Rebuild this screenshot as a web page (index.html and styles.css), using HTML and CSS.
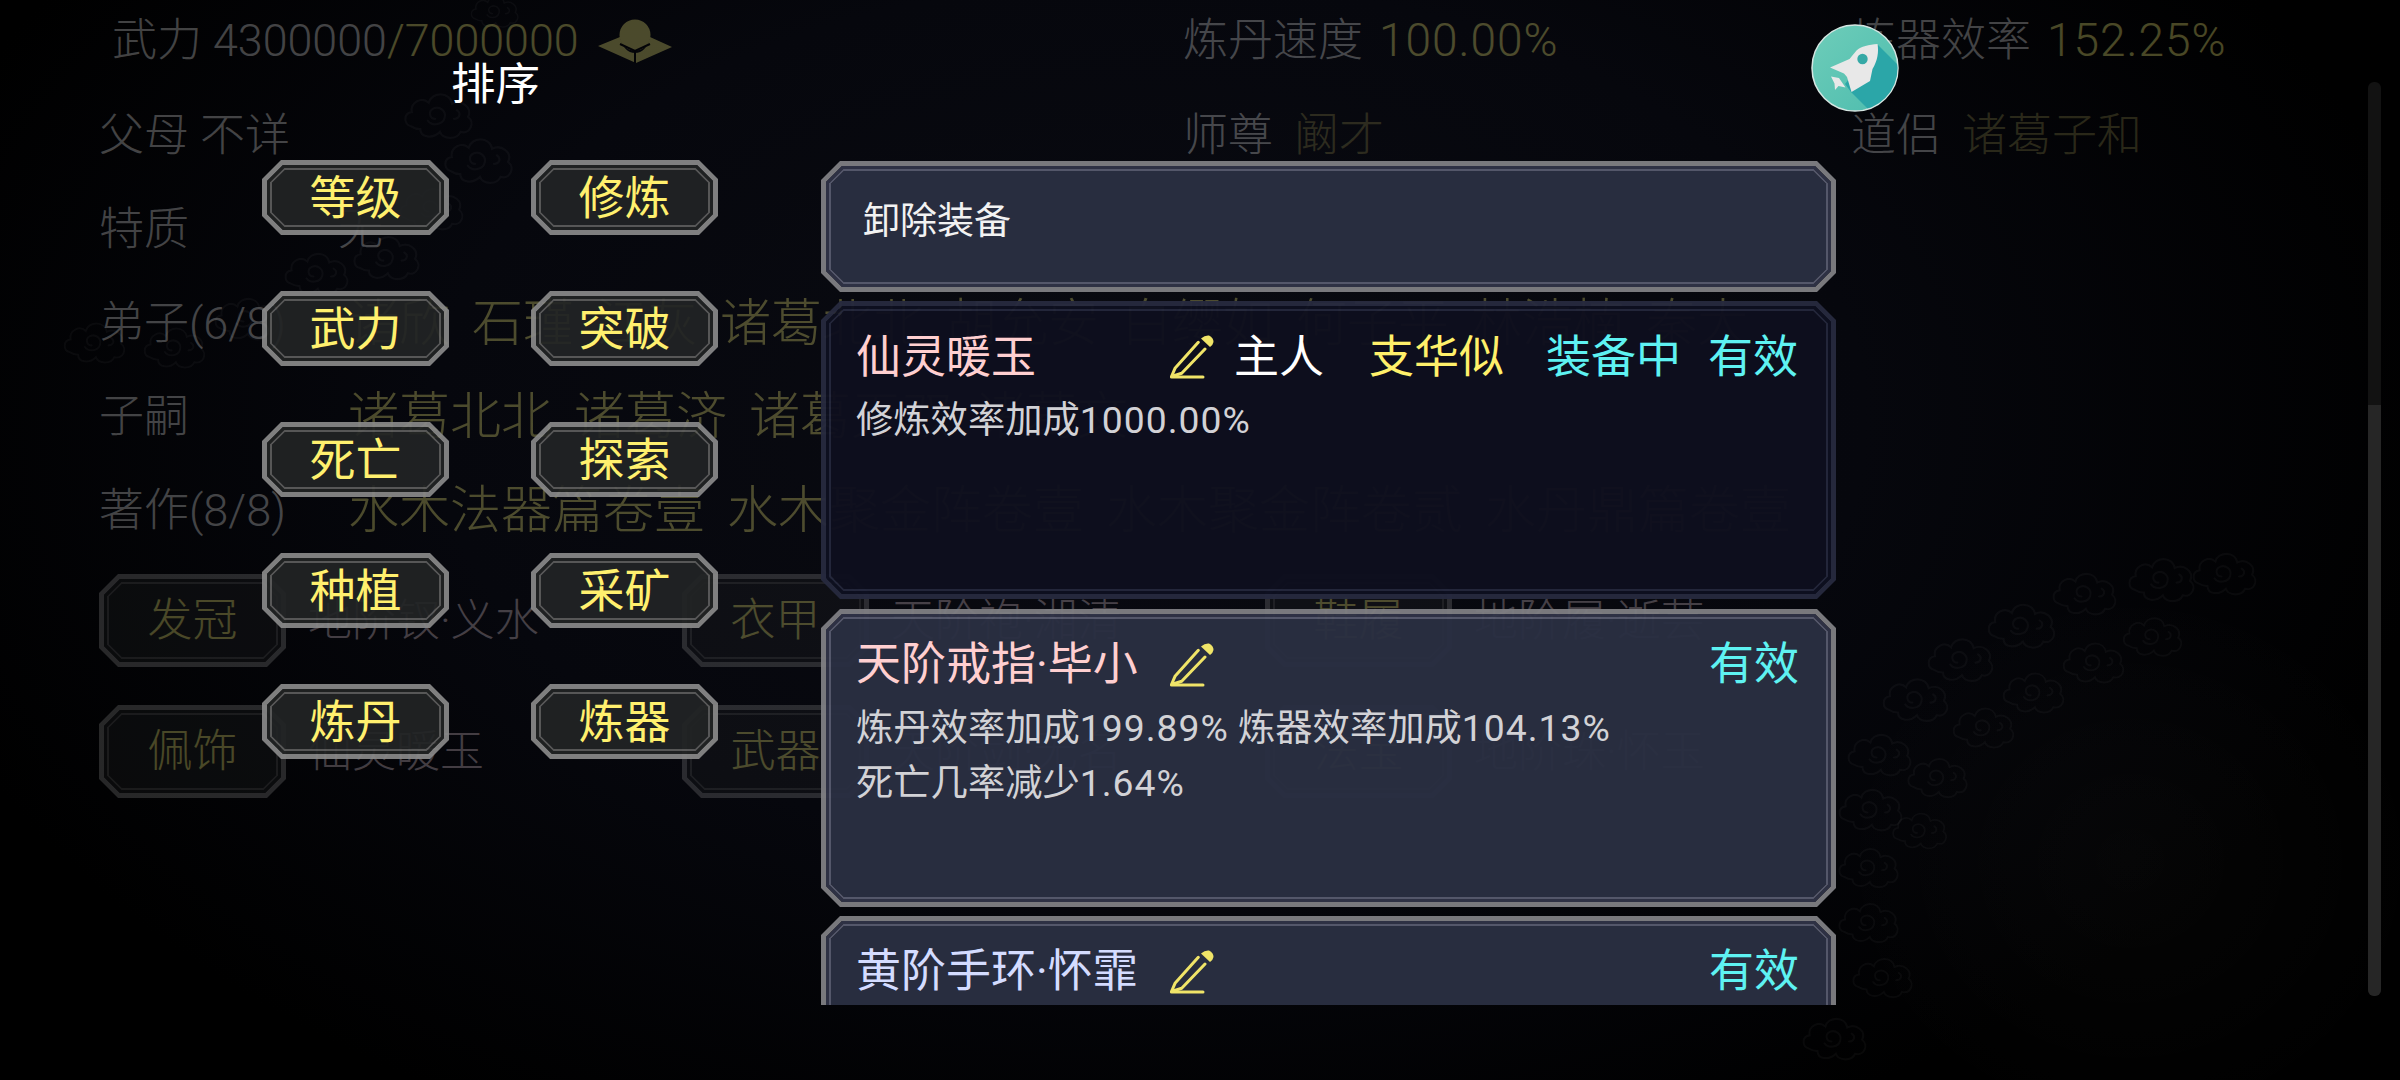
FILE: index.html
```html
<!DOCTYPE html>
<html lang="zh-CN">
<head>
<meta charset="utf-8">
<title>排序</title>
<link rel="stylesheet" href="styles.css">
</head>
<body>
<svg class="defs" width="0" height="0" aria-hidden="true">
  <defs>
    <symbol id="pencil" viewBox="0 0 44 44">
      <g fill="none" stroke="currentColor" stroke-width="3" stroke-linejoin="round" stroke-linecap="round">
        <path d="M28.3 7.3L5 33.3L1.5 41.5L11.7 38.3L35 14"/>
        <path d="M1.5 42H33"/>
      </g>
      <path fill="currentColor" d="M31 3.5Q35 0 39 .5Q43.5 2.5 43.5 7Q43 10 40 12Z"/>
    </symbol>
    <symbol id="cloud" viewBox="0 0 80 64" overflow="visible">
      <path fill="none" stroke="currentColor" stroke-width="2.4" stroke-linecap="round" d="M10 44C2 42 2 30 11 29C9 18 22 12 29 19C32 7 52 7 54 20C64 15 76 24 71 34C79 40 73 53 63 50C59 59 44 58 41 50C33 58 20 56 20 47C17 47 13 46 10 44ZM36 36C30 36 28 28 34 25C41 22 48 28 46 35C44 43 32 44 28 38M56 36C62 36 64 30 59 27"/>
    </symbol>
    <radialGradient id="blobFill">
      <stop offset="0" stop-color="#fff" stop-opacity=".02"/>
      <stop offset="1" stop-color="#fff" stop-opacity="0"/>
    </radialGradient>
  </defs>
</svg>

<main class="stage">
  <svg class="clouds" viewBox="0 0 2400 1080" width="2400" height="1080" aria-hidden="true">
    <ellipse fill="url(#blobFill)" cx="2130" cy="860" rx="300" ry="280"/>
    <g class="cloud-set">
      <use href="#cloud" x="2190" y="545" width="70" height="56"/>
      <use href="#cloud" x="2125" y="550" width="74" height="58"/>
      <use href="#cloud" x="2050" y="565" width="70" height="56"/>
      <use href="#cloud" x="1985" y="595" width="74" height="60"/>
      <use href="#cloud" x="1925" y="630" width="72" height="58"/>
      <use href="#cloud" x="1880" y="670" width="72" height="58"/>
      <use href="#cloud" x="1845" y="725" width="70" height="58"/>
      <use href="#cloud" x="1836" y="780" width="70" height="58"/>
      <use href="#cloud" x="1836" y="840" width="66" height="54"/>
      <use href="#cloud" x="1836" y="895" width="66" height="54"/>
      <use href="#cloud" x="1850" y="950" width="66" height="54"/>
      <use href="#cloud" x="1800" y="1010" width="70" height="56"/>
      <use href="#cloud" x="2120" y="610" width="66" height="52"/>
      <use href="#cloud" x="2060" y="635" width="68" height="54"/>
      <use href="#cloud" x="2000" y="665" width="68" height="54"/>
      <use href="#cloud" x="1950" y="700" width="68" height="54"/>
      <use href="#cloud" x="1905" y="750" width="66" height="54"/>
      <use href="#cloud" x="1890" y="805" width="60" height="50"/>
      <use href="#cloud" x="460" y="-10" width="70" height="42"/>
      <use href="#cloud" x="400" y="85" width="78" height="60"/>
      <use href="#cloud" x="440" y="130" width="78" height="60"/>
      <use href="#cloud" x="395" y="180" width="74" height="56"/>
      <use href="#cloud" x="350" y="228" width="74" height="58"/>
      <use href="#cloud" x="280" y="245" width="74" height="56"/>
      <use href="#cloud" x="210" y="290" width="74" height="56"/>
      <use href="#cloud" x="140" y="320" width="70" height="54"/>
      <use href="#cloud" x="60" y="315" width="70" height="54"/>
    </g>
  </svg>

  <div class="dim">
    <div class="stat-row">
      <div class="stat power">武力 <span class="power-num">4300000</span><span class="gold power-num">/7000000</span>
        <svg class="ingot" viewBox="0 0 74 44" width="74" height="44" aria-hidden="true">
          <path class="ingot-fill" d="M0 27L22 18Q26 34 37 34Q48 34 52 18L74 28L38 44Z"/>
          <circle class="ingot-fill" cx="37" cy="16" r="15.5"/>
          <path class="ingot-line" d="M22 25L37 32L52 25M37 32V44"/>
        </svg>
      </div>
      <div class="stat">炼丹速度 <span class="gold gap-s num">100.00%</span></div>
      <div class="stat">炼器效率 <span class="gold gap-s num">152.25%</span></div>
    </div>
    <div class="stat-row">
      <div class="stat">父母 不详</div>
      <div class="stat">师尊 <span class="dull">阚才</span></div>
      <div class="stat">道侣 <span class="dull">诸葛子和</span></div>
    </div>
    <div class="info-row"><span class="label">特质</span><span class="none">无</span></div>
    <div class="info-row"><span class="label">弟子(6/8)</span><span class="names"><b>诸欣</b><b>石瑾</b><b>江灰</b><b>诸葛北北</b><b>胡允安</b><b>白缨如</b><b>何子平</b><b>林浩楠</b><b>秦大</b></span></div>
    <div class="info-row"><span class="label">子嗣</span><span class="names"><b>诸葛北北</b><b>诸葛济</b><b>诸葛无双</b><b>诸葛文</b></span></div>
    <div class="info-row"><span class="label">著作(8/8)</span><span class="names"><b>水木法器篇卷壹</b><b>水木聚金阵卷壹</b><b>水木聚金阵卷贰</b><b>水丹鼎篇卷壹</b></span></div>
    <div class="equip-grid">
      <div class="equip"><span class="slot frame-btn">发冠</span><span class="item">地阶钗·义水</span></div>
      <div class="equip"><span class="slot frame-btn">衣甲</span><span class="item">天阶袍·湘清</span></div>
      <div class="equip"><span class="slot frame-btn">鞋履</span><span class="item">地阶履·逝芸</span></div>
      <div class="equip"><span class="slot frame-btn">佩饰</span><span class="item">仙灵暖玉</span></div>
      <div class="equip"><span class="slot frame-btn">武器</span><span class="item">天阶剑·无名</span></div>
      <div class="equip"><span class="slot frame-btn">法宝</span><span class="item">地阶珠·怀玉</span></div>
    </div>
  </div>

  <section class="list">
    <div class="panel frame-panel panel-head">卸除装备</div>
    <article class="panel frame-dark">
      <div class="card-top">
        <span class="title pink">仙灵暖玉</span>
        <svg class="pencil" aria-hidden="true"><use href="#pencil"/></svg>
        <span class="owner">主人</span>
        <span class="holder">支华似</span>
        <span class="equipped">装备中</span>
        <span class="valid">有效</span>
      </div>
      <p class="desc">修炼效率加成<span class="num-sm">1000.00%</span></p>
    </article>
    <article class="panel frame-panel">
      <div class="card-top">
        <span class="title pink">天阶戒指·毕小</span>
        <svg class="pencil" aria-hidden="true"><use href="#pencil"/></svg>
        <span class="valid">有效</span>
      </div>
      <p class="desc">炼丹效率加成<span class="num-sm">199.89%</span> 炼器效率加成<span class="num-sm">104.13%</span></p>
      <p class="desc">死亡几率减少<span class="num-sm">1.64%</span></p>
    </article>
    <article class="panel frame-panel">
      <div class="card-top">
        <span class="title lav">黄阶手环·怀霏</span>
        <svg class="pencil" aria-hidden="true"><use href="#pencil"/></svg>
        <span class="valid">有效</span>
      </div>
    </article>
  </section>

  <section class="sort">
    <h2 class="sort-title">排序</h2>
    <div class="sort-grid">
      <button class="sort-btn frame-btn">等级</button>
      <button class="sort-btn frame-btn">修炼</button>
      <button class="sort-btn frame-btn">武力</button>
      <button class="sort-btn frame-btn">突破</button>
      <button class="sort-btn frame-btn">死亡</button>
      <button class="sort-btn frame-btn">探索</button>
      <button class="sort-btn frame-btn">种植</button>
      <button class="sort-btn frame-btn">采矿</button>
      <button class="sort-btn frame-btn">炼丹</button>
      <button class="sort-btn frame-btn">炼器</button>
    </div>
  </section>

  <svg class="rocket" viewBox="0 0 88 88" width="88" height="88" aria-hidden="true">
    <defs>
      <clipPath id="disc"><circle cx="44" cy="44" r="42.5"/></clipPath>
      <linearGradient id="discFill" x1="0" y1="0" x2="1" y2="1">
        <stop offset="0" stop-color="#6ecdb9"/>
        <stop offset="1" stop-color="#4dbcae"/>
      </linearGradient>
    </defs>
    <circle cx="44" cy="44" r="43" fill="url(#discFill)" stroke="#d5e6e2" stroke-width="1.5"/>
    <polygon clip-path="url(#disc)" fill="#2ba6a8" points="67,21 90,44 90,90 62,90 40,68 34,60 50,40"/>
    <path fill="#e8e8e8" d="M66.5 20C58 20.500 50 22.500 45.500 26.500L38.500 35L19 43.500L33 49.500L36 53L40.500 68L59 57L61.500 45C66.500 37 68 28 66.500 20Z"/>
    <path fill="#e8e8e8" d="M20 52.500L28 54L34.500 63.500L27.500 62L24 66L23.500 59.500Z"/>
    <circle cx="51.500" cy="35" r="5.200" fill="#35a9a6"/>
  </svg>

  <div class="scrollbar"><div class="thumb"></div></div>
</main>
</body>
</html>
```

FILE: styles.css
```css
* { box-sizing: border-box; }
html, body { margin: 0; padding: 0; background: #000; }
.defs { display: block; height: 0; }

.stage {
  position: relative;
  width: 2400px;
  height: 1080px;
  overflow: hidden;
  font-family: Roboto, "Noto Sans CJK SC", sans-serif;
  font-weight: 300;
  background: radial-gradient(ellipse 1300px 800px at 1150px 420px, #0a0b12 0%, #06070d 55%, #000 100%);
}

/* nine-slice frames */
.frame-btn {
  border: 24px solid transparent;
  border-image: url("data:image/svg+xml,%3Csvg xmlns='http://www.w3.org/2000/svg' width='60' height='60'%3E%3Cpath fill-rule='evenodd' fill='rgb(138,138,138)' fill-opacity='.92' d='M19 0H41L60 19V41L41 60H19L0 41V19ZM21 5H39L55 21V39L39 55H21L5 39V21Z'/%3E%3Cpath fill-rule='evenodd' fill='rgb(34,36,36)' fill-opacity='.92' d='M21 5H39L55 21V39L39 55H21L5 39V21ZM22.300 8H37.700L52 22.300V37.700L37.700 52H22.300L8 37.700V22.300Z'/%3E%3Cpath fill-rule='evenodd' fill='rgb(92,92,92)' fill-opacity='.95' d='M22.300 8H37.700L52 22.300V37.700L37.700 52H22.300L8 37.700V22.300ZM23.100 10H36.900L50 23.100V36.900L36.900 50H23.100L10 36.900V23.100Z'/%3E%3Cpath fill='rgb(34,36,37)' fill-opacity='.92' d='M23.100 10H36.900L50 23.100V36.900L36.900 50H23.100L10 36.900V23.100Z'/%3E%3C/svg%3E") 24 fill / 24px stretch;
}
.frame-panel {
  border: 24px solid transparent;
  border-image: url("data:image/svg+xml,%3Csvg xmlns='http://www.w3.org/2000/svg' width='60' height='60'%3E%3Cpath fill-rule='evenodd' fill='rgb(128,128,132)' fill-opacity='.95' d='M19 0H41L60 19V41L41 60H19L0 41V19ZM21 5H39L55 21V39L39 55H21L5 39V21Z'/%3E%3Cpath fill-rule='evenodd' fill='rgb(48,52,72)' fill-opacity='.95' d='M21 5H39L55 21V39L39 55H21L5 39V21ZM22.300 8H37.700L52 22.300V37.700L37.700 52H22.300L8 37.700V22.300Z'/%3E%3Cpath fill-rule='evenodd' fill='rgb(88,92,112)' fill-opacity='.95' d='M22.300 8H37.700L52 22.300V37.700L37.700 52H22.300L8 37.700V22.300ZM23.100 10H36.900L50 23.100V36.900L36.900 50H23.100L10 36.900V23.100Z'/%3E%3Cpath fill='rgb(42,47,66)' fill-opacity='.96' d='M23.100 10H36.900L50 23.100V36.900L36.900 50H23.100L10 36.900V23.100Z'/%3E%3C/svg%3E") 24 fill / 24px stretch;
}
.frame-dark {
  border: 24px solid transparent;
  border-image: url("data:image/svg+xml,%3Csvg xmlns='http://www.w3.org/2000/svg' width='60' height='60'%3E%3Cpath fill-rule='evenodd' fill='rgb(38,42,62)' fill-opacity='.96' d='M19 0H41L60 19V41L41 60H19L0 41V19ZM21 5H39L55 21V39L39 55H21L5 39V21Z'/%3E%3Cpath fill-rule='evenodd' fill='rgb(14,16,32)' fill-opacity='.96' d='M21 5H39L55 21V39L39 55H21L5 39V21ZM22.300 8H37.700L52 22.300V37.700L37.700 52H22.300L8 37.700V22.300Z'/%3E%3Cpath fill-rule='evenodd' fill='rgb(36,40,60)' fill-opacity='.96' d='M22.300 8H37.700L52 22.300V37.700L37.700 52H22.300L8 37.700V22.300ZM23.100 10H36.900L50 23.100V36.900L36.900 50H23.100L10 36.900V23.100Z'/%3E%3Cpath fill='rgb(13,15,30)' fill-opacity='.965' d='M23.100 10H36.900L50 23.100V36.900L36.900 50H23.100L10 36.900V23.100Z'/%3E%3C/svg%3E") 24 fill / 24px stretch;
}

/* background ornament */
.clouds { position: absolute; left: 0; top: 0; }
.cloud-set { color: rgba(255, 255, 255, .035); }

/* dimmed character sheet behind the dialog */
.dim {
  position: absolute;
  left: 0;
  top: 0;
  width: 2400px;
  padding: 8px 0 0 99px;
  opacity: .3;
  color: #d8d8d8;
  font-size: 45px;
  line-height: 64px;
}
.stat-row {
  display: grid;
  grid-template-columns: 1084px 668px auto;
  height: 64px;
  margin-bottom: 29.500px;
}
.stat-row + .stat-row { padding-top: 2px; }
.stat { white-space: nowrap; }
.power { margin-left: 13px; display: flex; align-items: center; gap: 0; white-space: pre; }
.power-num { font-size: 44.800px; }
.num { font-size: 46px; letter-spacing: 1px; }
.num-sm { letter-spacing: 1px; }
.gold { color: #eee878; }
.dull { color: #847e46; margin-left: 10px; }
.gap-s { margin-left: 5px; }
.ingot { margin-left: 19px; }
.ingot-fill { fill: #eee878; }
.ingot-line { fill: none; stroke: #000; stroke-width: 2; }

.info-row {
  display: flex;
  height: 64px;
  padding-top: 3px;
  margin-bottom: 29.500px;
  white-space: nowrap;
}
.label { width: 249px; flex: none; }
.none { margin-left: -10px; }
.names { color: #eee878; font-size: 51px; display: flex; gap: 22px; }
.names b { font-weight: 300; }

.equip-grid {
  display: grid;
  grid-template-columns: repeat(3, 583px);
  row-gap: 38px;
  margin-top: 34.500px;
}
.equip { display: flex; align-items: center; gap: 22px; white-space: nowrap; }
.slot {
  width: 187px;
  height: 93px;
  display: flex;
  align-items: center;
  justify-content: center;
  color: #eee878;
  line-height: 45px;
  flex: none;
}
.item { color: #d4c0c8; font-size: 44px; }

/* dialog list */
.list {
  position: absolute;
  left: 821px;
  top: 161px;
  width: 1015px;
  height: 844px;
  overflow: hidden;
  display: flex;
  flex-direction: column;
  gap: 9.300px;
}
.panel {
  flex: none;
  height: 298px;
  padding: 0 13px 0 11px;
  font-weight: 400;
}
.panel-head {
  height: 131px;
  padding: 12px 18px 0;
  color: #f2f2f2;
  font-size: 37px;
  line-height: 50px;
}
.card-top {
  display: flex;
  align-items: center;
  height: 64px;
  padding-top: 1px;
  font-size: 45px;
  line-height: 62px;
  white-space: nowrap;
}
.title { width: 314px; flex: none; }
.pink { color: #ffcfd0; }
.lav { color: #d4dcff; }
.pencil { width: 44px; height: 44px; flex: none; margin-top: -1px; color: #f0e468; }
.owner { margin-left: 20px; color: #fff; }
.holder { margin-left: 45px; color: #fff06a; }
.equipped { margin-left: 42px; color: #5ef2f2; }
.valid { margin-left: auto; color: #5ef2f2; }
.card-top .equipped + .valid { margin-left: 27px; }
.desc {
  margin: 0;
  color: #d2d2d6;
  font-size: 37.300px;
  line-height: 55px;
  white-space: nowrap;
}
.card-top + .desc { margin-top: 4px; }

/* sort menu */
.sort {
  position: absolute;
  left: 262px;
  top: 57px;
}
.sort-title {
  margin: 0 0 47px;
  padding-left: 189px;
  color: #fff;
  font-size: 44.500px;
  font-weight: 400;
  line-height: 56px;
}
.sort-grid {
  display: grid;
  grid-template-columns: 187px 187px;
  column-gap: 82px;
  row-gap: 56px;
}
.sort-btn {
  height: 75px;
  padding: 2px 0 0;
  background: none;
  color: #fff06e;
  font: inherit;
  font-size: 46px;
  font-weight: 400;
  line-height: 25px;
  display: flex;
  align-items: center;
  justify-content: center;
  white-space: nowrap;
}

/* floating items */
.rocket { position: absolute; left: 1811px; top: 24px; }
.scrollbar {
  position: absolute;
  left: 2368px;
  top: 82px;
  width: 13px;
  height: 914px;
  border-radius: 6px;
  background: #121212;
  overflow: hidden;
}
.thumb {
  margin-top: 323px;
  height: 591px;
  background: #262626;
}
```
